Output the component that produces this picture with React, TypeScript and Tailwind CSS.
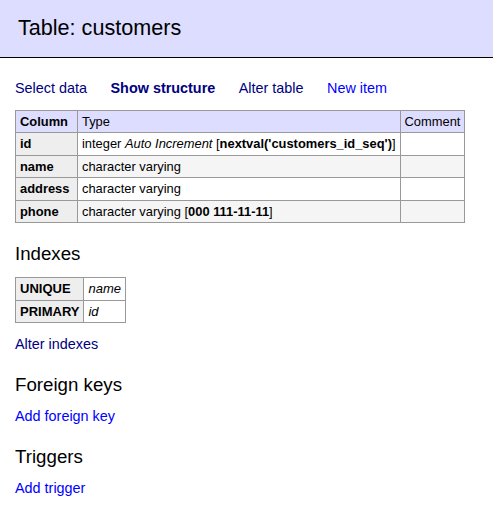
import React from 'react';

const columns = [
  { name: 'id', type: <>integer <i>Auto Increment</i> [<b>nextval('customers_id_seq')</b>]</> },
  { name: 'name', type: <>character varying</> },
  { name: 'address', type: <>character varying</> },
  { name: 'phone', type: <>character varying [<b>000 111-11-11</b>]</> },
];

const indexes = [
  { kind: 'UNIQUE', col: 'name' },
  { kind: 'PRIMARY', col: 'id' },
];

const cell = 'border border-[#999] px-[4px] py-[2px] leading-[17.4px] text-left align-top whitespace-nowrap';

const App: React.FC = () => {
  return (
    <div className="min-h-screen bg-white text-black text-[14.4px] leading-[18px]" style={{ fontFamily: '"Liberation Sans", Arial, sans-serif' }}>
      {/* Header */}
      <h2 className="bg-[#ddf] border-b border-black px-[18px] pt-[14px] pb-[16px] text-[21.6px] leading-[27px] font-normal">
        Table: customers
      </h2>

      <div className="px-[15px]">
        {/* Links */}
        <p className="mt-[21px] flex gap-[23.5px] whitespace-nowrap">
          <a className="text-[#000080]">Select data</a>
          <a className="text-[#000080] font-bold">Show structure</a>
          <a className="text-[#000080]">Alter table</a>
          <a className="text-[#0000ff]">New item</a>
        </p>

        {/* Structure table */}
        <table className="mt-[13px] border-collapse border border-[#999] text-[12.9px]">
          <thead>
            <tr className="bg-[#ddf]">
              <th className={`${cell} font-bold w-[62px]`}>Column</th>
              <td className={cell}>Type</td>
              <td className={cell}>Comment</td>
            </tr>
          </thead>
          <tbody>
            {columns.map((c, i) => (
              <tr key={c.name} className={i % 2 === 1 ? 'bg-[#f5f5f5]' : ''}>
                <th className={`${cell} bg-[#eee] font-bold`}>{c.name}</th>
                <td className={cell}>{c.type}</td>
                <td className={cell}></td>
              </tr>
            ))}
          </tbody>
        </table>

        {/* Indexes */}
        <h3 className="mt-[19px] text-[18.7px] leading-[23.4px] font-normal">Indexes</h3>
        <table className="mt-[12px] border-collapse border border-[#999] text-[13px]">
          <tbody>
            {indexes.map((x) => (
              <tr key={x.kind}>
                <th className={`${cell} bg-[#eee] font-bold`}>{x.kind}</th>
                <td className={cell}><i>{x.col}</i></td>
              </tr>
            ))}
          </tbody>
        </table>
        <p className="mt-[12px]"><a className="text-[#000080]">Alter indexes</a></p>

        {/* Foreign keys */}
        <h3 className="mt-[20px] text-[18.7px] leading-[23.4px] font-normal">Foreign keys</h3>
        <p className="mt-[10px]"><a className="text-[#0000ff]">Add foreign key</a></p>

        {/* Triggers */}
        <h3 className="mt-[20px] text-[18.7px] leading-[23.4px] font-normal">Triggers</h3>
        <p className="mt-[11px]"><a className="text-[#0000ff]">Add trigger</a></p>
      </div>
    </div>
  );
};

export default App;
